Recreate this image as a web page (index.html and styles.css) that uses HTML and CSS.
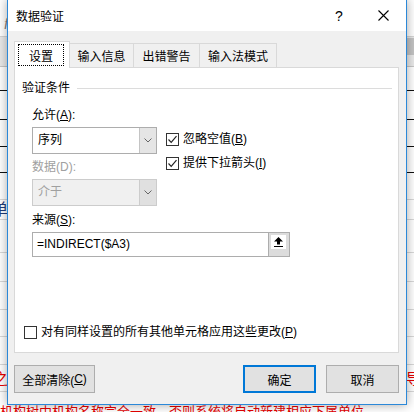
FILE: index.html
```html
<!DOCTYPE html>
<html lang="zh">
<head>
<meta charset="utf-8">
<title>数据验证</title>
<link rel="stylesheet" href="styles.css">
</head>
<body>
<div class="sheet">
  <div class="fbar"><span class="fx">ƒ</span></div>
  <div class="colhead"><span class="colsel"></span></div>
  <div class="row dark r24"></div>
  <div class="row dark r29"></div>
  <div class="row dark r27"></div>
  <div class="row dark r26"></div>
  <div class="row r27"></div>
  <div class="row r20"><span class="blue">单</span></div>
  <div class="row r33"></div>
  <div class="row r29"></div>
  <div class="row r28"></div>
  <div class="row r27"></div>
  <div class="row r28"></div>
  <div class="row red"><span class="lch">之</span><span class="rch">导</span></div>
  <div class="redtext">机构树中机构名称完全一致，否则系统将自动新建相应下属单位</div>
</div>

<div class="dialog">
  <div class="titlebar">
    <div class="title">数据验证</div>
    <div class="tbtn help">?</div>
    <div class="tbtn close">
      <svg width="11" height="11" viewBox="0 0 11 11"><path d="M0.5 0.5 L10.5 10.5 M10.5 0.5 L0.5 10.5" stroke="#000" stroke-width="1.1" fill="none"/></svg>
    </div>
  </div>
  <div class="body">
    <div class="tabs">
      <div class="tab active"><span class="focus">设置</span></div>
      <div class="tab t2">输入信息</div>
      <div class="tab t3">出错警告</div>
      <div class="tab t4">输入法模式</div>
    </div>
    <div class="panel">
      <div class="group-head">验证条件</div>
      <div class="settings">
        <div class="toprow">
          <div class="leftcol">
            <div class="label">允许(<u>A</u>):</div>
            <div class="select">
              <span class="val">序列</span>
              <span class="arrow"><svg width="8" height="5" viewBox="0 0 8 5"><path d="M0.5 0.5 L4 4 L7.5 0.5" stroke="#666" fill="none"/></svg></span>
            </div>
            <div class="label dis l2">数据(D):</div>
            <div class="select disabled">
              <span class="val">介于</span>
              <span class="arrow"><svg width="8" height="5" viewBox="0 0 8 5"><path d="M0.5 0.5 L4 4 L7.5 0.5" stroke="#666" fill="none"/></svg></span>
            </div>
          </div>
          <div class="rightcol">
            <div class="check">
              <span class="cb"><svg width="11" height="11" viewBox="0 0 11 11"><path d="M1.5 5.5 L4.2 8.3 L9.5 2.2" stroke="#222" stroke-width="1.2" fill="none"/></svg></span>
              <span>忽略空值(<u>B</u>)</span>
            </div>
            <div class="check c2">
              <span class="cb"><svg width="11" height="11" viewBox="0 0 11 11"><path d="M1.5 5.5 L4.2 8.3 L9.5 2.2" stroke="#222" stroke-width="1.2" fill="none"/></svg></span>
              <span>提供下拉箭头(<u>I</u>)</span>
            </div>
          </div>
        </div>
        <div class="label l3">来源(<u>S</u>):</div>
        <div class="input">
          <span class="txt">=INDIRECT($A3)</span>
          <span class="pick"><span class="pickface"><svg width="15" height="14" viewBox="0 0 15 14"><path d="M7.5 2 L12 6.5 L9 6.5 L9 9.5 L6 9.5 L6 6.5 L3 6.5 Z" fill="#000"/><rect x="3" y="11" width="9" height="1" fill="#000"/></svg></span></span>
        </div>
      </div>
      <div class="check apply">
        <span class="cb"></span>
        <span>对有同样设置的所有其他单元格应用这些更改(<u>P</u>)</span>
      </div>
    </div>
    <div class="footer">
      <div class="btn clear">全部清除(<u>C</u>)</div>
      <div class="spacer"></div>
      <div class="btn ok">确定</div>
      <div class="btn cancel">取消</div>
    </div>
  </div>
</div>
</body>
</html>
```
FILE: styles.css
```css
* { box-sizing: border-box; }
html, body { margin: 0; padding: 0; }
body {
  width: 414px;
  height: 412px;
  overflow: hidden;
  position: relative;
  background: #fff;
  font-family: "Liberation Sans", "Noto Sans CJK SC", sans-serif;
  font-size: 12px;
  color: #000;
}

/* background spreadsheet */
.sheet { display: flex; flex-direction: column; height: 412px; }
.fbar { height: 37px; flex: none; border-bottom: 1px solid #d4d4d4; }
.fx { display: block; font-family: "Liberation Serif", serif; font-style: italic; color: #777; font-size: 15px; line-height: 16px; padding: 14px 0 0 3px; }
.colhead { height: 30px; flex: none; background: #e9e9e9; border-bottom: 1px solid #c6c6c6; display: flex; justify-content: flex-end; }
.colsel { width: 10px; height: 17px; margin-top: 1px; background: #c3c3c3; }
.row { flex: none; border-bottom: 1px solid #d8d8d8; display: flex; justify-content: space-between; }
.row.dark { border-bottom-color: #111; }
.r20 { height: 20px; }
.r24 { height: 24px; }
.r26 { height: 26px; }
.r27 { height: 27px; }
.r28 { height: 28px; }
.r29 { height: 29px; }
.r33 { height: 33px; }
.blue { color: #1f3d7a; font-size: 16px; line-height: 20px; margin-left: -8px; }
.row.red { height: 27px; color: #e60000; font-size: 15px; line-height: 27px; }
.lch { margin-left: -7px; }
.rch { margin-right: -7px; }
.redtext { color: #e60000; font-size: 13px; line-height: 20px; white-space: nowrap; padding-top: 10px; }

/* dialog */
.dialog {
  position: absolute;
  left: 7px;
  top: -1px;
  width: 400px;
  height: 406px;
  border: 1px solid #2b88d8;
  background: #f0f0f0;
  box-shadow: 0 0 10px rgba(0, 0, 0, 0.35);
  display: flex;
  flex-direction: column;
}
.titlebar { height: 31px; flex: none; background: #fff; display: flex; align-items: center; }
.title { flex: 1; padding-left: 8px; }
.tbtn { height: 31px; display: flex; align-items: center; justify-content: center; }
.help { width: 42px; font-size: 14px; }
.close { width: 46px; }

.body { flex: 1; display: flex; flex-direction: column; padding: 10px 7px 10px 6px; }
.tabs { display: flex; align-items: flex-end; height: 27px; flex: none; margin-bottom: -1px; position: relative; z-index: 1; }
.tab {
  height: 24px;
  margin-bottom: 1px;
  margin-left: -1px;
  border: 1px solid #d9d9d9;
  border-bottom: none;
  background: #f0f0f0;
  display: flex;
  align-items: center;
  justify-content: center;
}
.tab.active { height: 27px; margin-bottom: 0; margin-left: 0; background: #fff; width: 56px; align-items: stretch; padding: 2px 5px 2px 3px; }
.focus { flex: 1; border: 1px dotted #000; display: flex; align-items: center; justify-content: center; }
.t2 { width: 65px; }
.t3 { width: 67px; }
.t4 { width: 78px; }

.panel {
  height: 286px;
  flex: none;
  background: #fff;
  border: 1px solid #d9d9d9;
  display: flex;
  flex-direction: column;
  padding: 12px 6px 12px 7px;
}
.group-head { display: flex; align-items: center; line-height: 16px; }
.group-head::after { content: ""; flex: 1; height: 1px; background: #dcdcdc; margin-left: 7px; }
.settings { padding-left: 10px; margin-top: 11px; display: flex; flex-direction: column; }
.toprow { display: flex; gap: 9px; }
.leftcol { width: 125px; display: flex; flex-direction: column; }
.label { line-height: 16px; }
.label.dis { color: #a0a0a0; }
.l2 { margin-top: 5px; }
.l3 { margin-top: 6px; }
.select { height: 27px; margin-top: 4px; border: 1px solid #adadad; background: #fff; display: flex; }
.select .val { flex: 1; padding-left: 5px; line-height: 25px; }
.select .arrow { width: 17px; background: #e5e5e5; border-left: 1px solid #c4c4c4; display: flex; align-items: center; justify-content: center; }
.select.disabled { background: #f0f0f0; border-color: #cccccc; color: #a0a0a0; }
.select.disabled .arrow { background: #e0e0e0; border-left-color: #cccccc; }

.rightcol { padding-top: 24px; display: flex; flex-direction: column; }
.check { display: flex; align-items: center; gap: 4px; line-height: 16px; }
.c2 { margin-top: 8px; }
.cb { width: 13px; height: 13px; flex: none; border: 1px solid #333; background: #fff; display: flex; }
.input { display: flex; width: 258px; height: 25px; margin-top: 4px; border: 1px solid #adadad; }
.input .txt { flex: 1; padding-left: 4px; line-height: 23px; }
.pick { width: 21px; background: #dcdcdc; border-left: 1px solid #adadad; padding: 2px 3px 7px 2px; display: flex; }
.pickface { flex: 1; background: #fff; display: flex; }
.apply { margin-top: auto; margin-left: 2px; }

.footer { display: flex; margin-top: 12px; gap: 10px; flex: none; }
.spacer { flex: 1; }
.btn { height: 28px; border: 1px solid #adadad; background: #e1e1e1; display: flex; align-items: center; justify-content: center; }
.clear { width: 81px; }
.ok { width: 73px; border: 2px solid #0078d7; }
.cancel { width: 73px; }
```
